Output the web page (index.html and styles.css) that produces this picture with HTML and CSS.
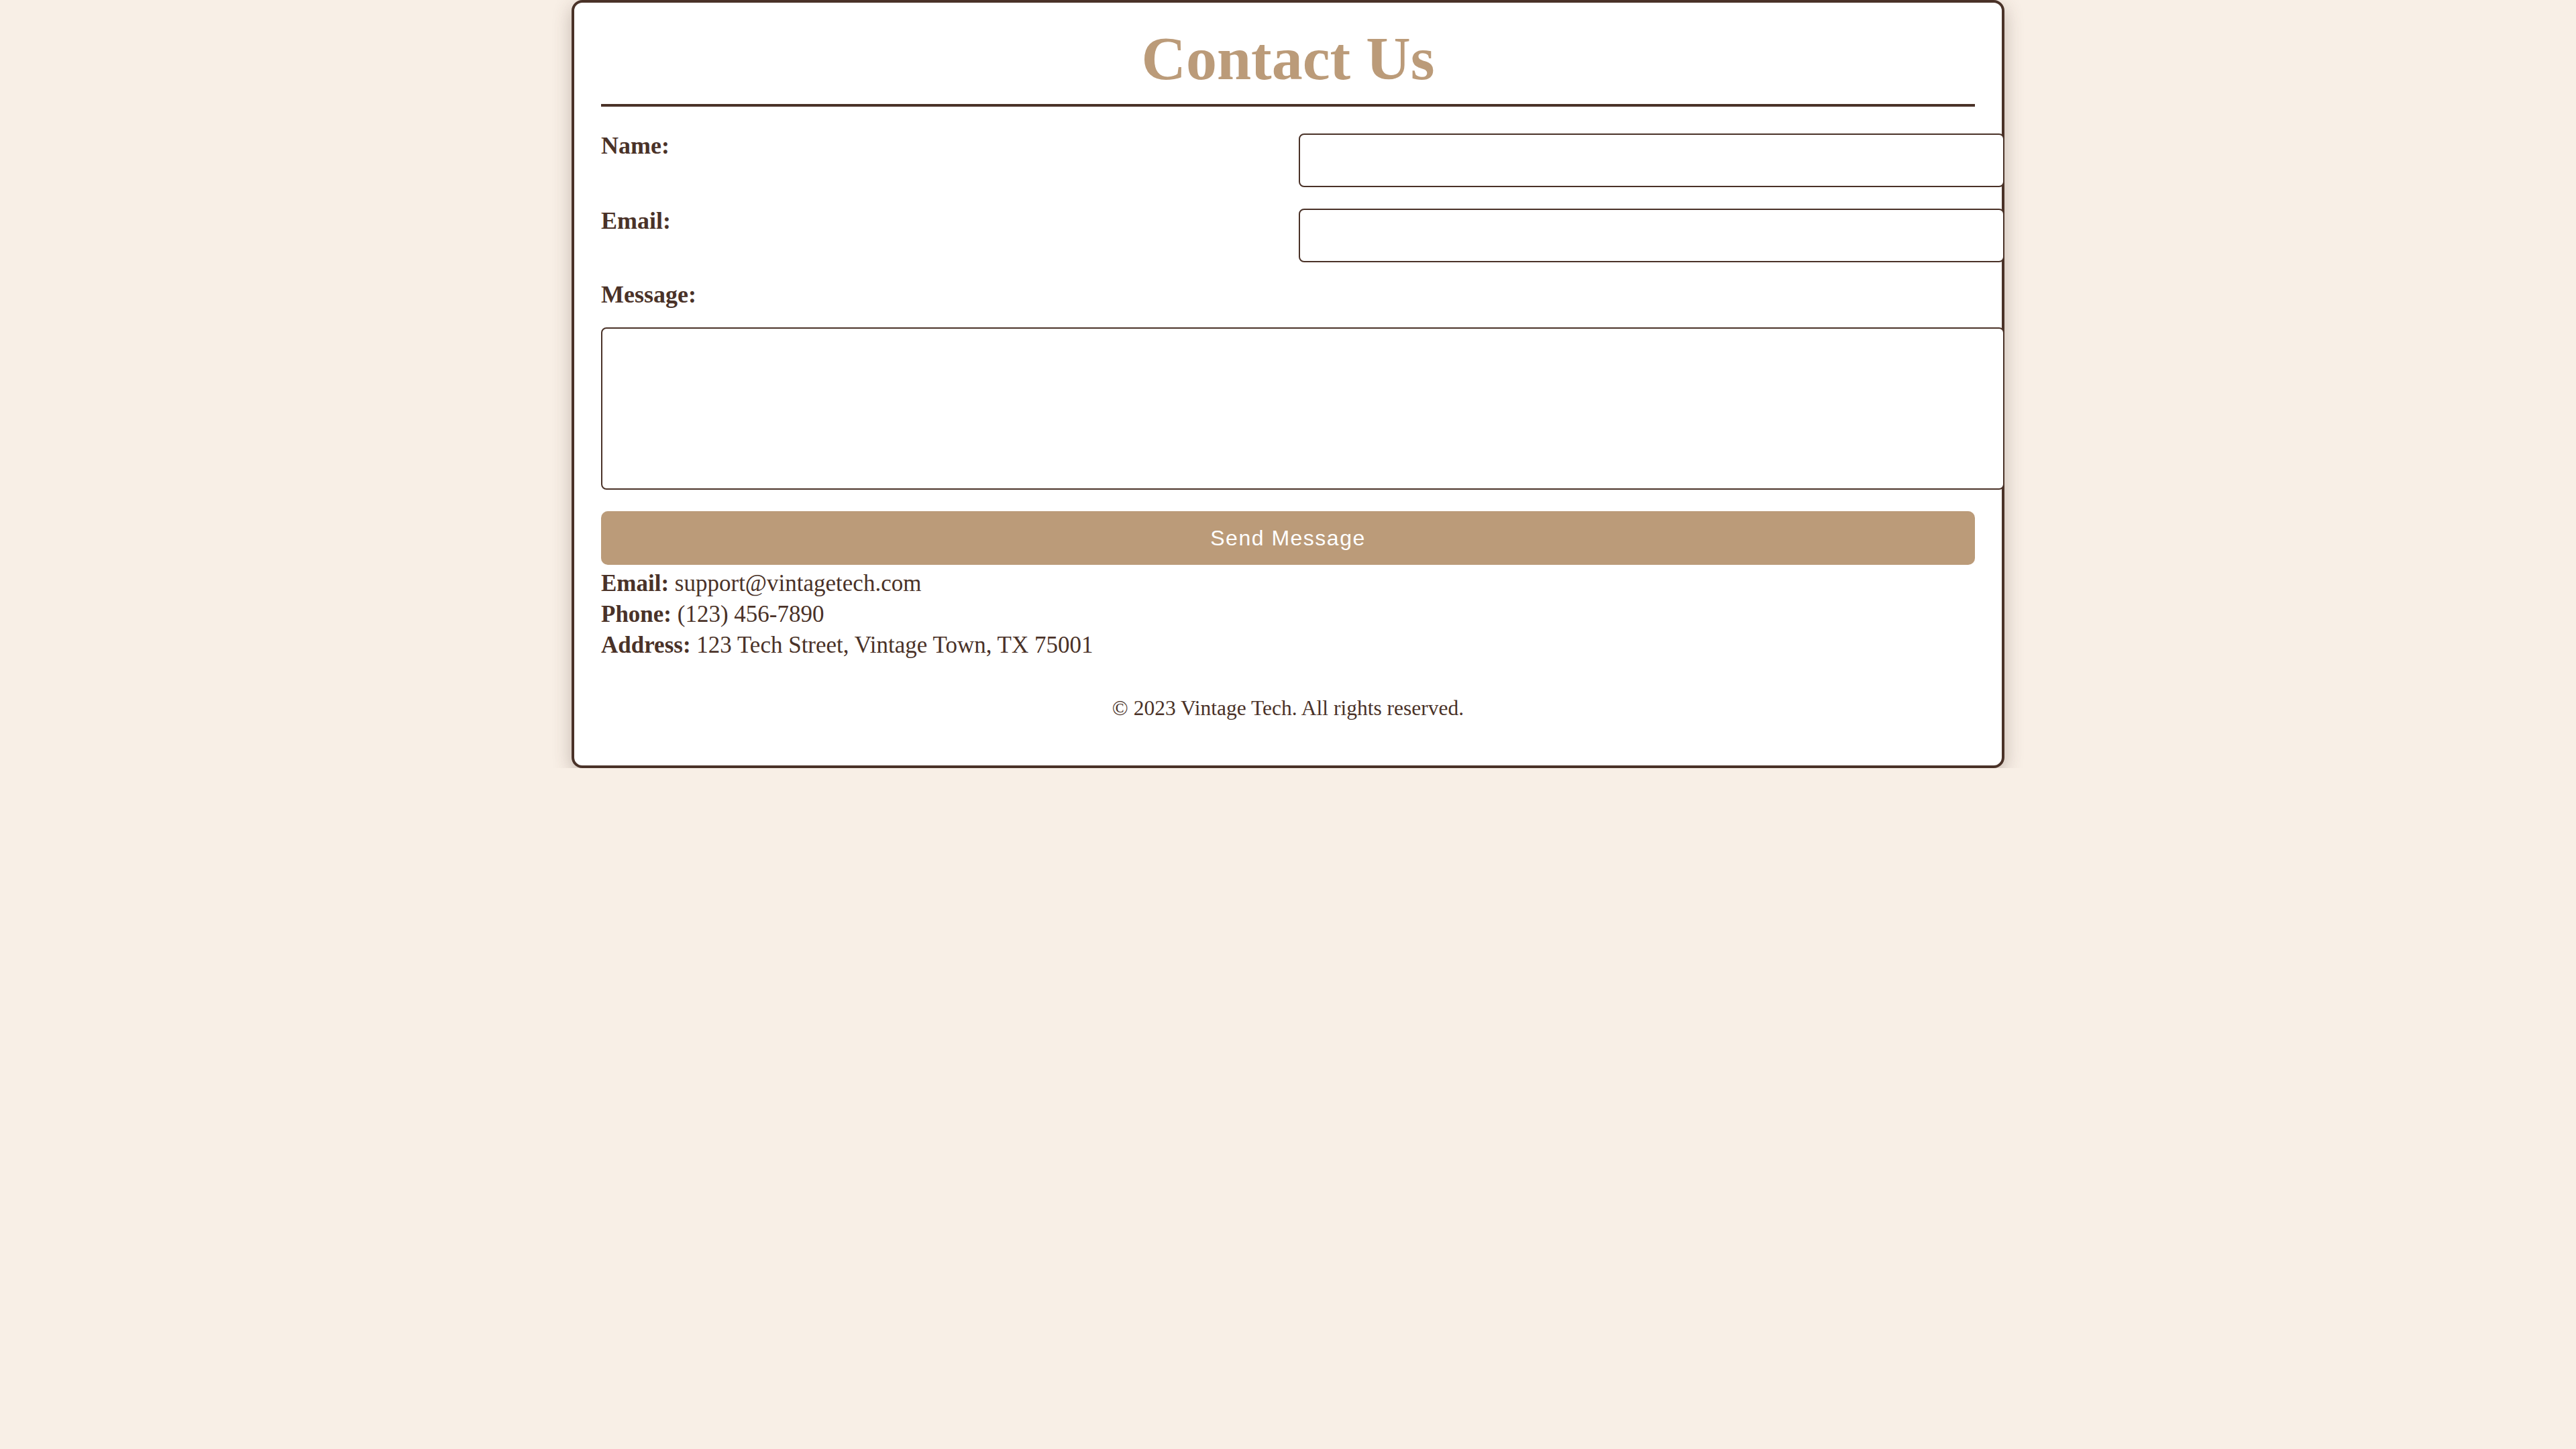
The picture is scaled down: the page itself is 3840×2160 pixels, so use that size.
FILE: index.html
```html
<!DOCTYPE html>
<html lang="en">
<head>
<meta charset="utf-8">
<title>Contact Us - Vintage Tech</title>
<link rel="stylesheet" href="styles.css">
</head>
<body>
<div class="container">
  <h1 class="title">Contact Us</h1>
  <form class="form">
    <label class="label" for="name">Name:</label>
    <input class="field" id="name" type="text">
    <label class="label" for="email">Email:</label>
    <input class="field" id="email" type="email">
    <label class="label full" for="message">Message:</label>
    <textarea class="field area full" id="message"></textarea>
    <button class="send full" type="button">Send Message</button>
  </form>
  <div class="info">
    <p class="line"><strong>Email:</strong> support@vintagetech.com</p>
    <p class="line"><strong>Phone:</strong> (123) 456-7890</p>
    <p class="line"><strong>Address:</strong> 123 Tech Street, Vintage Town, TX 75001</p>
  </div>
  <footer class="footer">© 2023 Vintage Tech. All rights reserved.</footer>
</div>
</body>
</html>
```
FILE: styles.css
```css
body {
  margin: 0;
  background: #f8efe6;
  color: #4a3228;
  font-family: "Liberation Serif", "Times New Roman", serif;
  font-size: 35px;
}

.container {
  width: 2048px;
  margin: 0 auto;
  padding: 40px;
  background: #ffffff;
  border: 4px solid #4a3228;
  border-radius: 16px;
  box-shadow: 0 8px 28px rgba(74, 50, 40, 0.3);
}

.title {
  margin: 0 0 40px;
  padding-bottom: 24px;
  border-bottom: 4px solid #4a3228;
  text-align: center;
  font-size: 92px;
  line-height: 87px;
  font-weight: bold;
  color: #bb9b79;
}

.form {
  display: grid;
  grid-template-columns: 1fr 1fr;
  column-gap: 32px;
  row-gap: 32px;
}

.label {
  font-weight: bold;
  font-size: 36px;
  line-height: 36px;
}

.label.full {
  line-height: 33px;
}

.full {
  grid-column: 1 / -1;
}

.field {
  width: 100%;
  height: 40px;
  margin: 0;
  padding: 18px 20px;
  border: 2px solid #4a3228;
  border-radius: 8px;
  background: #ffffff;
  font-family: "Liberation Serif", serif;
  font-size: 32px;
  color: #4a3228;
  box-sizing: content-box;
  outline: none;
}

.area {
  height: 198px;
  padding: 20px;
  resize: none;
  display: block;
}

.send {
  height: 80px;
  margin: 0;
  border: none;
  border-radius: 10px;
  background: #bb9b79;
  color: #ffffff;
  font-family: "Liberation Sans", Arial, sans-serif;
  font-size: 32px;
  letter-spacing: 1.5px;
}

.info {
  margin-top: 5px;
}

.line {
  margin: 0;
  line-height: 46px;
}

.footer {
  margin: 55px 0 29px;
  text-align: center;
  font-size: 31.5px;
  line-height: 32px;
}
```
